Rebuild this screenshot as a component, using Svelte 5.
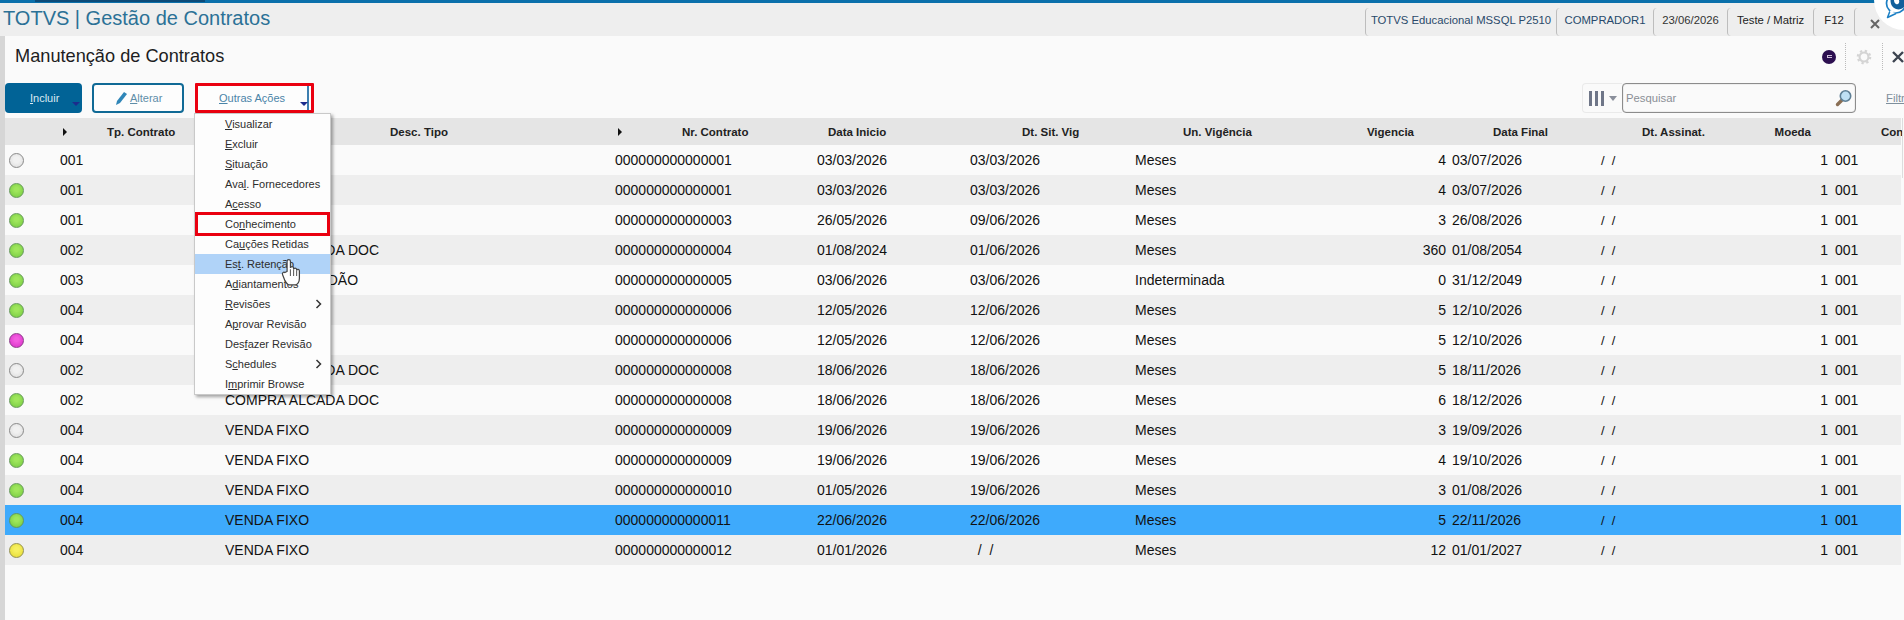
<script>
  const G = 'green', W = 'grey', M = 'magenta', Y = 'yellow';
  const N = '00000000000000';
  const rows = [
    [W, '001', '', N + '1', '03/03/2026', '03/03/2026', 'Meses', '4', '03/07/2026'],
    [G, '001', '', N + '1', '03/03/2026', '03/03/2026', 'Meses', '4', '03/07/2026'],
    [G, '001', '', N + '3', '26/05/2026', '09/06/2026', 'Meses', '3', '26/08/2026'],
    [G, '002', 'COMPRA ALCADA DOC', N + '4', '01/08/2024', '01/06/2026', 'Meses', '360', '01/08/2054'],
    [G, '003', 'COMPRA ALGODÃO', N + '5', '03/06/2026', '03/06/2026', 'Indeterminada', '0', '31/12/2049'],
    [G, '004', '', N + '6', '12/05/2026', '12/06/2026', 'Meses', '5', '12/10/2026'],
    [M, '004', '', N + '6', '12/05/2026', '12/06/2026', 'Meses', '5', '12/10/2026'],
    [W, '002', 'COMPRA ALCADA DOC', N + '8', '18/06/2026', '18/06/2026', 'Meses', '5', '18/11/2026'],
    [G, '002', 'COMPRA ALCADA DOC', N + '8', '18/06/2026', '18/06/2026', 'Meses', '6', '18/12/2026'],
    [W, '004', 'VENDA FIXO', N + '9', '19/06/2026', '19/06/2026', 'Meses', '3', '19/09/2026'],
    [G, '004', 'VENDA FIXO', N + '9', '19/06/2026', '19/06/2026', 'Meses', '4', '19/10/2026'],
    [G, '004', 'VENDA FIXO', '0000000000000' + '10', '01/05/2026', '19/06/2026', 'Meses', '3', '01/08/2026'],
    [G, '004', 'VENDA FIXO', '0000000000000' + '11', '22/06/2026', '22/06/2026', 'Meses', '5', '22/11/2026'],
    [Y, '004', 'VENDA FIXO', '0000000000000' + '12', '01/01/2026', '  /  /', 'Meses', '12', '01/01/2027']
  ];
  const menu = [
    ['', 'V', 'isualizar'], ['', 'E', 'xcluir'], ['', 'S', 'ituação'], ['Ava', 'l', '. Fornecedores'],
    ['A', 'c', 'esso'], ['Co', 'n', 'hecimento'], ['Ca', 'u', 'ções Retidas'], ['Es', 't', '. Retenção'],
    ['A', 'd', 'iantamentos'], ['', 'R', 'evisões'], ['A', 'p', 'rovar Revisão'], ['Des', 'f', 'azer Revisão'],
    ['S', 'c', 'hedules'], ['I', 'm', 'primir Browse']
  ];
</script>

<div class="page">
  <div class="stripe"><div class="stripe-dark"></div></div>
  <header class="appbar">
    <div class="brand">TOTVS | Gestão de Contratos</div>
    <div class="info">
      <span class="tab t1">TOTVS Educacional MSSQL P2510</span>
      <span class="tab t2">COMPRADOR1</span>
      <span class="tab t3">23/06/2026</span>
      <span class="tab t4">Teste / Matriz</span>
      <span class="tab t5">F12</span>
      <span class="tab t6">
        <svg width="12" height="12" viewBox="0 0 12 12"><path d="M2 2l8 8M10 2l-8 8" stroke="#666" stroke-width="2"/></svg>
      </span>
    </div>
  </header>

  <main class="main">
    <div class="title-row">
      <h1>Manutenção de Contratos</h1>
      <div class="title-icons">
        <span class="cdot"><i></i></span>
        <span class="sep"></span>
        <svg class="gear" width="16" height="16" viewBox="0 0 18 18">
          <circle cx="9" cy="9" r="5" fill="none" stroke="#d4d4d4" stroke-width="2.4"/>
          <circle cx="9" cy="9" r="7" fill="none" stroke="#d4d4d4" stroke-width="2.4" stroke-dasharray="2.6 2.9"/>
        </svg>
        <span class="sep"></span>
        <svg class="close" width="14" height="14" viewBox="0 0 14 14"><path d="M2 2l10 10M12 2L2 12" stroke="#3d4450" stroke-width="2.4"/></svg>
      </div>
    </div>

    <div class="toolbar">
      <button class="btn incluir"><span><u>I</u>ncluir</span><i class="tri"></i></button>
      <button class="btn alterar">
        <svg width="13" height="15" viewBox="0 0 13 15"><path d="M1 14l1-4 7-9 3 2-7 9z" fill="#2f86b8"/></svg>
        <span><u>A</u>lterar</span>
      </button>
      <button class="btn outras">
        <span class="outras-in"><span><u>O</u>utras Ações</span><i class="tri"></i></span>
      </button>
      <div class="right">
        <div class="cols">
          <span class="bars"><i></i><i></i><i></i></span>
          <i class="greytri"></i>
        </div>
        <div class="search">
          <span>Pesquisar</span>
          <svg width="18" height="18" viewBox="0 0 18 18">
            <path d="M7 11L2.5 15.5" stroke="#8a6f55" stroke-width="3.4" stroke-linecap="round"/>
            <circle cx="10.5" cy="7" r="5.2" fill="#bfe0f4" stroke="#5f7f95" stroke-width="1.6"/>
          </svg>
        </div>
        <a class="filtrar" href="#top">Filtrar</a>
      </div>
    </div>

    <div class="table">
      <div class="row head">
        <span></span>
        <span class="h-tp"><i class="arrow"></i>Tp. Contrato</span>
        <span class="h-desc">Desc. Tipo</span>
        <span class="h-nr"><i class="arrow"></i>Nr. Contrato</span>
        <span class="h-ini">Data Inicio</span>
        <span class="h-sit">Dt. Sit. Vig</span>
        <span class="h-un">Un. Vigência</span>
        <span class="h-vig">Vigencia</span>
        <span class="h-fin">Data Final</span>
        <span class="h-ass">Dt. Assinat.</span>
        <span class="h-moe">Moeda</span>
        <span class="h-con">Con</span>
      </div>
      {#each rows as r, i}
        <div class="row" class:alt={i % 2 === 1} class:sel={i === 12}>
          <span class="stat"><i class="dot {r[0]}"></i></span>
          <span>{r[1]}</span>
          <span>{r[2]}</span>
          <span>{r[3]}</span>
          <span>{r[4]}</span>
          <span class="sit">{r[5]}</span>
          <span>{r[6]}</span>
          <span class="num">{r[7]}</span>
          <span class="fin">{r[8]}</span>
          <span class="slash">/ &nbsp;/</span>
          <span class="num">1</span>
          <span class="cur">001</span>
        </div>
      {/each}
    </div>
  </main>

  <div class="menu">
    {#each menu as m, i}
      <div class="item" class:hover={i === 7} class:boxed={i === 5}>
        <span>{m[0]}<u>{m[1]}</u>{m[2]}</span>
        {#if i === 9 || i === 12}
          <svg class="chev" width="7" height="10" viewBox="0 0 7 10"><path d="M1.5 1l4 4-4 4" fill="none" stroke="#333" stroke-width="1.5"/></svg>
        {/if}
      </div>
    {/each}
  </div>

  <svg class="hand" width="20" height="28" viewBox="0 0 17 25">
    <path d="M5 12V3a1.5 1.5 0 0 1 3 0v6a1.4 1.4 0 0 1 2.8 0v1a1.4 1.4 0 0 1 2.7 0v1a1.3 1.3 0 0 1 2.5.5V18c0 3-1.500 6-3.500 6H7c-2 0-3-2-4-4L1 15c-.8-1.600 1-3 2-2z" fill="#fff" stroke="#444" stroke-width="1.100"/>
    <path d="M8 10v6M10.800 10v6M13.500 11v5" stroke="#666" stroke-width="1"/>
  </svg>

  <div class="chat">
    <svg width="20" height="19" viewBox="0 0 20 19">
      <circle cx="12" cy="3.500" r="9.500" fill="#fff" stroke="#1b7fc4" stroke-width="1.700"/>
      <path d="M6 11L3.500 17.500 12 13.500" fill="#fff" stroke="#1b7fc4" stroke-width="1.500" stroke-linejoin="round"/>
      <path d="M5.500 11.500 8 12.500 12 12.500 7 10z" fill="#fff"/>
      <path d="M6.500 0C6.500 4 8 7.500 12 9 15 10 18 9 20 7V0h-5c1 3-1 5-3 4C10.500 3 10 1.500 10 0z" fill="#12609c"/>
    </svg>
  </div>
  <div class="edge"></div>
</div>

<style>
  :global(body) { margin: 0; background: #fafafa; }
  .page {
    position: relative; width: 1904px; height: 620px; overflow: hidden;
    font-family: "Liberation Sans", Arial, sans-serif; color: #111; background: #fafafa;
    display: flex; flex-direction: column;
  }
  .stripe { height: 3px; background: #0a70ab; flex: none; }
  .stripe-dark { width: 170px; height: 2px; margin-left: 35px; background: #0b4a78; }
  .appbar { height: 33px; flex: none; background: #eeeeee; display: flex; align-items: flex-start; }
  .brand { font-size: 20px; line-height: 24px; margin: 3px 0 0 3px; color: #2b7196; white-space: nowrap; }
  .info { margin-left: auto; display: flex; height: 33px; padding-top: 5px; box-sizing: border-box; }
  .tab {
    box-sizing: border-box; height: 28px; border-left: 1px solid #bdbdbd; border-radius: 4px 0 0 4px;
    font-size: 11.300px; line-height: 24px; text-align: center; white-space: nowrap; color: #222;
  }
  .t1 { width: 191px; color: #2a4a6a; }
  .t2 { width: 97px; color: #274a6b; }
  .t3 { width: 74px; color: #333; }
  .t4 { width: 86px; }
  .t5 { width: 41px; }
  .t6 { width: 50px; text-align: left; padding: 6px 0 0 14px; }

  .main { flex: 1; border-left: 5px solid #d6d6d6; display: flex; flex-direction: column; min-height: 0; }
  .title-row { height: 40px; flex: none; display: flex; align-items: center; }
  h1 { margin: 0 0 0 10px; font-size: 18.200px; font-weight: 400; color: #1d1d22; }
  .title-icons { margin-left: auto; display: flex; align-items: center; height: 27px; margin-top: 1px; }
  .cdot {
    width: 14px; height: 14px; border-radius: 50%; background: #2c0f50; display: flex;
    align-items: center; justify-content: center; margin-right: 9px;
  }
  .cdot i { width: 5px; height: 3px; border: 1px solid #cbbcd8; border-right: 0; box-sizing: border-box; }
  .sep { width: 0; height: 27px; border-left: 1px dotted #bbb; }
  .gear { margin: 0 10px; }
  .close { margin-left: 8px; flex: none; margin-right: -1px; }

  .toolbar { height: 30px; margin-top: 7px; flex: none; display: flex; align-items: stretch; }
  .btn {
    box-sizing: border-box; padding: 0; font: inherit; font-size: 11px; border-radius: 4px;
    display: flex; align-items: center; background: #fafafa; position: relative;
  }
  .incluir { width: 77px; background: #016396; border: 0; color: #dbe9f2; padding-left: 25px; }
  .alterar { width: 92px; margin-left: 10px; border: 2px solid #106a96; color: #5f8ea8; background: #fdfdfd; padding-left: 21px; gap: 2px; }
  .outras { width: 119px; margin-left: 11px; border: 3px solid #ea0010; border-radius: 1px; background: #fdfdfd; color: #4a84a8; }
  .outras-in {
    display: flex; align-items: center; height: 100%; width: 111px; padding-left: 21px;
    box-sizing: border-box; border-right: 2px solid #3d7fb0; position: relative;
  }
  .tri {
    position: absolute; width: 0; height: 0; border-left: 4px solid transparent; border-right: 4px solid transparent;
    border-top: 4px solid #1c2c8c;
  }
  .incluir .tri { left: 67px; top: 19px; }
  .outras .tri { left: 102px; top: 16px; }
  .right { margin-left: auto; display: flex; align-items: stretch; }
  .cols {
    box-sizing: border-box; width: 40px; border: 1px solid #eaeaea; border-right: 0; border-radius: 4px 0 0 4px;
    display: flex; align-items: center; gap: 5px; padding-left: 6px;
  }
  .bars { display: flex; gap: 3px; }
  .bars i { display: block; width: 3px; height: 15px; background: #6f7688; }
  .greytri { width: 0; height: 0; border-left: 4px solid transparent; border-right: 4px solid transparent; border-top: 5px solid #8a8f9b; }
  .search {
    box-sizing: border-box; width: 234px; border: 1px solid #8c8c8c; border-radius: 4px; display: flex;
    align-items: center; justify-content: space-between; padding: 0 2px 0 3px; font-size: 11.300px; color: #8a8f96;
    box-shadow: inset 0 0 1px #888;
  }
  .filtrar { width: 18px; margin-left: 30px; overflow: hidden; font-size: 11.300px; line-height: 30px; color: #7e8f9c; text-decoration: underline; }

  .table { margin-top: 5px; width: 1896px; }
  .row {
    display: grid; height: 30px; align-items: center; font-size: 14px; white-space: nowrap;
    grid-template-columns: 55px 165px 390px 202px 153px 165px 165px 146px 155px 129px 98px 73px;
  }
  .row > span { overflow: visible; min-width: 0; }
  .alt { background: #eeeeee; }
  .sel { background: #3eaafc; }
  .head { height: 27px; background: #e5e5e5; font-size: 11.500px; font-weight: 700; color: #222; }
  .h-tp, .h-nr { display: flex; align-items: center; padding-left: 3px; }
  .arrow {
    width: 0; height: 0; border-top: 4px solid transparent; border-bottom: 4px solid transparent;
    border-left: 4px solid #111; margin-right: 40px;
  }
  .h-nr .arrow { margin-right: 60px; }
  .h-desc { padding-left: 165px; }
  .h-ini { padding-left: 11px; }
  .h-sit { padding-left: 52px; }
  .h-un { padding-left: 48px; }
  .h-vig { text-align: right; padding-right: 32px; }
  .h-fin { padding-left: 47px; }
  .h-ass { padding-left: 41px; }
  .h-moe { text-align: right; padding-right: 17px; }
  .h-con { padding-left: 53px; }
  .stat { display: flex; padding-left: 4px; }
  .sit { white-space: pre; }
  .num { text-align: right; }
  .fin { padding-left: 6px; }
  .cur { padding-left: 7px; }
  .slash { font-size: 13px; }
  .dot {
    display: block; box-sizing: border-box; width: 15px; height: 15px; border-radius: 50%;
    border: 1px solid #8a8a8a;
  }
  .grey { background: radial-gradient(circle at 50% 45%, #f1f1f1 30%, #d9d9d9 100%); }
  .green { background: radial-gradient(circle at 50% 42%, #9fe65c 20%, #72c83f 100%); border-color: #659a59; }
  .magenta { background: radial-gradient(circle at 50% 42%, #f35ce0 20%, #d62cc4 100%); border-color: #8d3b8a; }
  .yellow { background: radial-gradient(circle at 50% 42%, #f6f060 20%, #e4d930 100%); border-color: #94914e; }

  .menu {
    position: absolute; left: 195px; top: 114px; width: 135px; background: #fdfdfd;
    box-shadow: 0 0 0 1px #c9c9c9, 2px 2px 3px 1px rgba(0,0,0,.35); font-size: 11px; color: #2d2d2d;
  }
  .item { height: 20px; line-height: 20px; padding-left: 30px; position: relative; white-space: nowrap; }
  .item.hover { background: #b0d3f8; }
  .item.boxed::before { content: ""; position: absolute; left: 0; right: 0; top: -2px; bottom: -2px; border: 3px solid #ea0010; }
  .chev { position: absolute; right: 8px; top: 5px; }
  .hand { position: absolute; left: 281px; top: 258px; }
  .chat {
    position: absolute; left: 1874px; top: -30px; width: 60px; height: 60px; border-radius: 50%; background: #fff;
  }
  .chat svg { position: absolute; left: 10px; top: 30px; }
  .edge { position: absolute; left: 1902px; top: 118px; width: 2px; height: 60px; border-left: 1px solid #ddd; }
</style>
